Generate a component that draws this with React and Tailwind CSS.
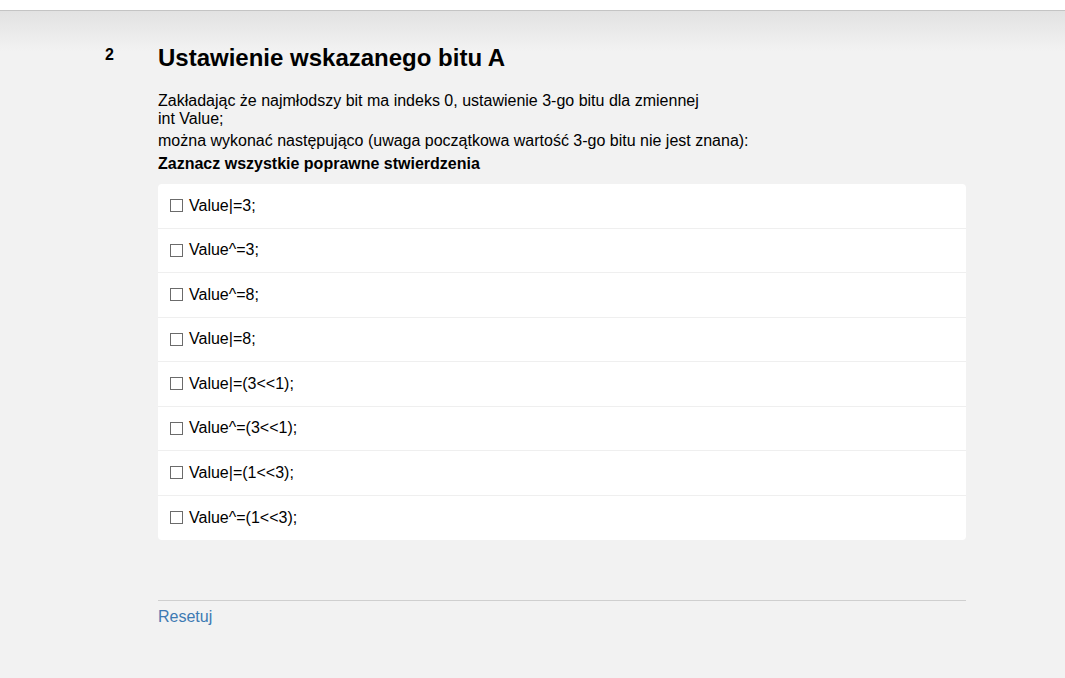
const OPTIONS = [
  'Value|=3;',
  'Value^=3;',
  'Value^=8;',
  'Value|=8;',
  'Value|=(3<<1);',
  'Value^=(3<<1);',
  'Value|=(1<<3);',
  'Value^=(1<<3);',
];

export default function App() {
  return (
    <div className="min-h-[678px] bg-[#f2f2f2] text-black font-['Liberation_Sans',Arial,sans-serif]">
      <div className="h-[11px] bg-white border-b border-[#c4c4c4]" />
      <div className="h-[40px] bg-gradient-to-b from-[#e2e2e2] to-[#f2f2f2]" />

      <div className="flex pl-[105px] pr-[99px] -mt-[7px]">
        <div className="w-[53px] text-[16px] font-bold leading-[16px] pt-[3px]">2</div>
        <div className="flex-1">
          <h2 className="text-[24px] font-bold leading-[28px]">Ustawienie wskazanego bitu A</h2>

          <div className="mt-[20px] text-[16px] leading-[18px]">
            <p>Zakładając że najmłodszy bit ma indeks 0, ustawienie 3-go bitu dla zmiennej</p>
            <p>int Value;</p>
            <p className="mt-[4px]">można wykonać następująco (uwaga początkowa wartość 3-go bitu nie jest znana):</p>
            <p className="mt-[5px] font-bold">Zaznacz wszystkie poprawne stwierdzenia</p>
          </div>

          <div className="mt-[11px] bg-white rounded-[4px]">
            {OPTIONS.map((opt, i) => (
              <label
                key={opt}
                className={`flex items-center h-[44.5px] px-[12px] text-[16px] cursor-pointer ${i < OPTIONS.length - 1 ? 'border-b border-[#efefef]' : ''}`}
              >
                <span className="w-[13px] h-[13px] border border-[#6b6b6b] mr-[6px] shrink-0" />
                <span>{opt}</span>
              </label>
            ))}
          </div>

          <div className="mt-[60px] border-t border-[#cfcfcf] pt-[4px]">
            <button className="text-[16px] text-[#3d7ab3] leading-[20px]">Resetuj</button>
          </div>
        </div>
      </div>
    </div>
  );
}
